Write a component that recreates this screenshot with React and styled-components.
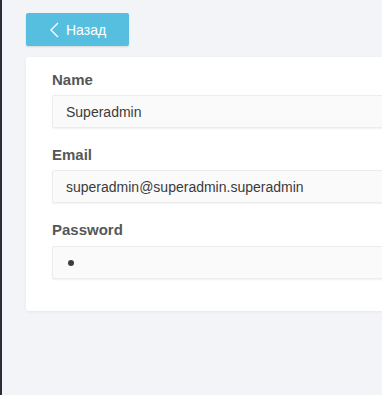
import React from 'react';
import styled, { createGlobalStyle } from 'styled-components';

const GlobalStyle = createGlobalStyle`
  html, body {
    margin: 0;
    padding: 0;
    height: 100%;
    overflow: hidden;
  }
  body {
    background: #f3f4f8;
    font-family: "Liberation Sans", Arial, sans-serif;
  }
`;

const Page = styled.div`
  min-height: 395px;
  box-sizing: border-box;
  border-left: 2px solid #2a2e39;
  padding: 13px 0 0 24px;
  overflow: hidden;
`;

const BackButton = styled.button`
  display: inline-flex;
  align-items: center;
  gap: 7px;
  height: 33px;
  width: 103px;
  padding: 0 0 0 24px;
  box-sizing: border-box;
  border: none;
  border-radius: 2px;
  background: #56bfdf;
  color: #fff;
  font-family: inherit;
  font-size: 14px;
  cursor: pointer;
  box-shadow: 0 1px 2px rgba(0, 0, 0, 0.12);
`;

const Card = styled.div`
  margin-top: 11px;
  margin-right: -20px;
  background: #fff;
  border-radius: 3px;
  box-shadow: 0 1px 3px rgba(0, 0, 0, 0.06);
  padding: 13px 0 32px 26px;
`;

const Field = styled.div`
  & + & {
    margin-top: 17px;
  }
`;

const Label = styled.label`
  display: block;
  font-size: 15px;
  font-weight: bold;
  line-height: 20px;
  color: #575757;
  margin-bottom: ${(props) => props.$gap || 5}px;
`;

const Input = styled.div`
  height: 33px;
  box-sizing: border-box;
  display: flex;
  align-items: center;
  padding: 0 13px;
  background: #fafafa;
  border: 1px solid #ececec;
  border-radius: 2px;
  box-shadow: 0 1px 2px rgba(0, 0, 0, 0.06);
  font-size: 14px;
  color: #3a3a3a;
  white-space: nowrap;
`;

const Dot = styled.span`
  display: inline-block;
  width: 6px;
  height: 6px;
  margin-left: 2px;
  border-radius: 50%;
  background: #3c3c3c;
`;

export default function App() {
  return (
    <>
      <GlobalStyle />
      <Page>
        <BackButton>
          <svg width="9" height="16" viewBox="0 0 9 16" fill="none">
            <path d="M8 1L1 8l7 7" stroke="#fff" strokeWidth="1.4" />
          </svg>
          Назад
        </BackButton>
        <Card>
          <Field>
            <Label>Name</Label>
            <Input>Superadmin</Input>
          </Field>
          <Field>
            <Label>Email</Label>
            <Input>superadmin@superadmin.superadmin</Input>
          </Field>
          <Field>
            <Label $gap={6}>Password</Label>
            <Input>
              <Dot />
            </Input>
          </Field>
        </Card>
      </Page>
    </>
  );
}
